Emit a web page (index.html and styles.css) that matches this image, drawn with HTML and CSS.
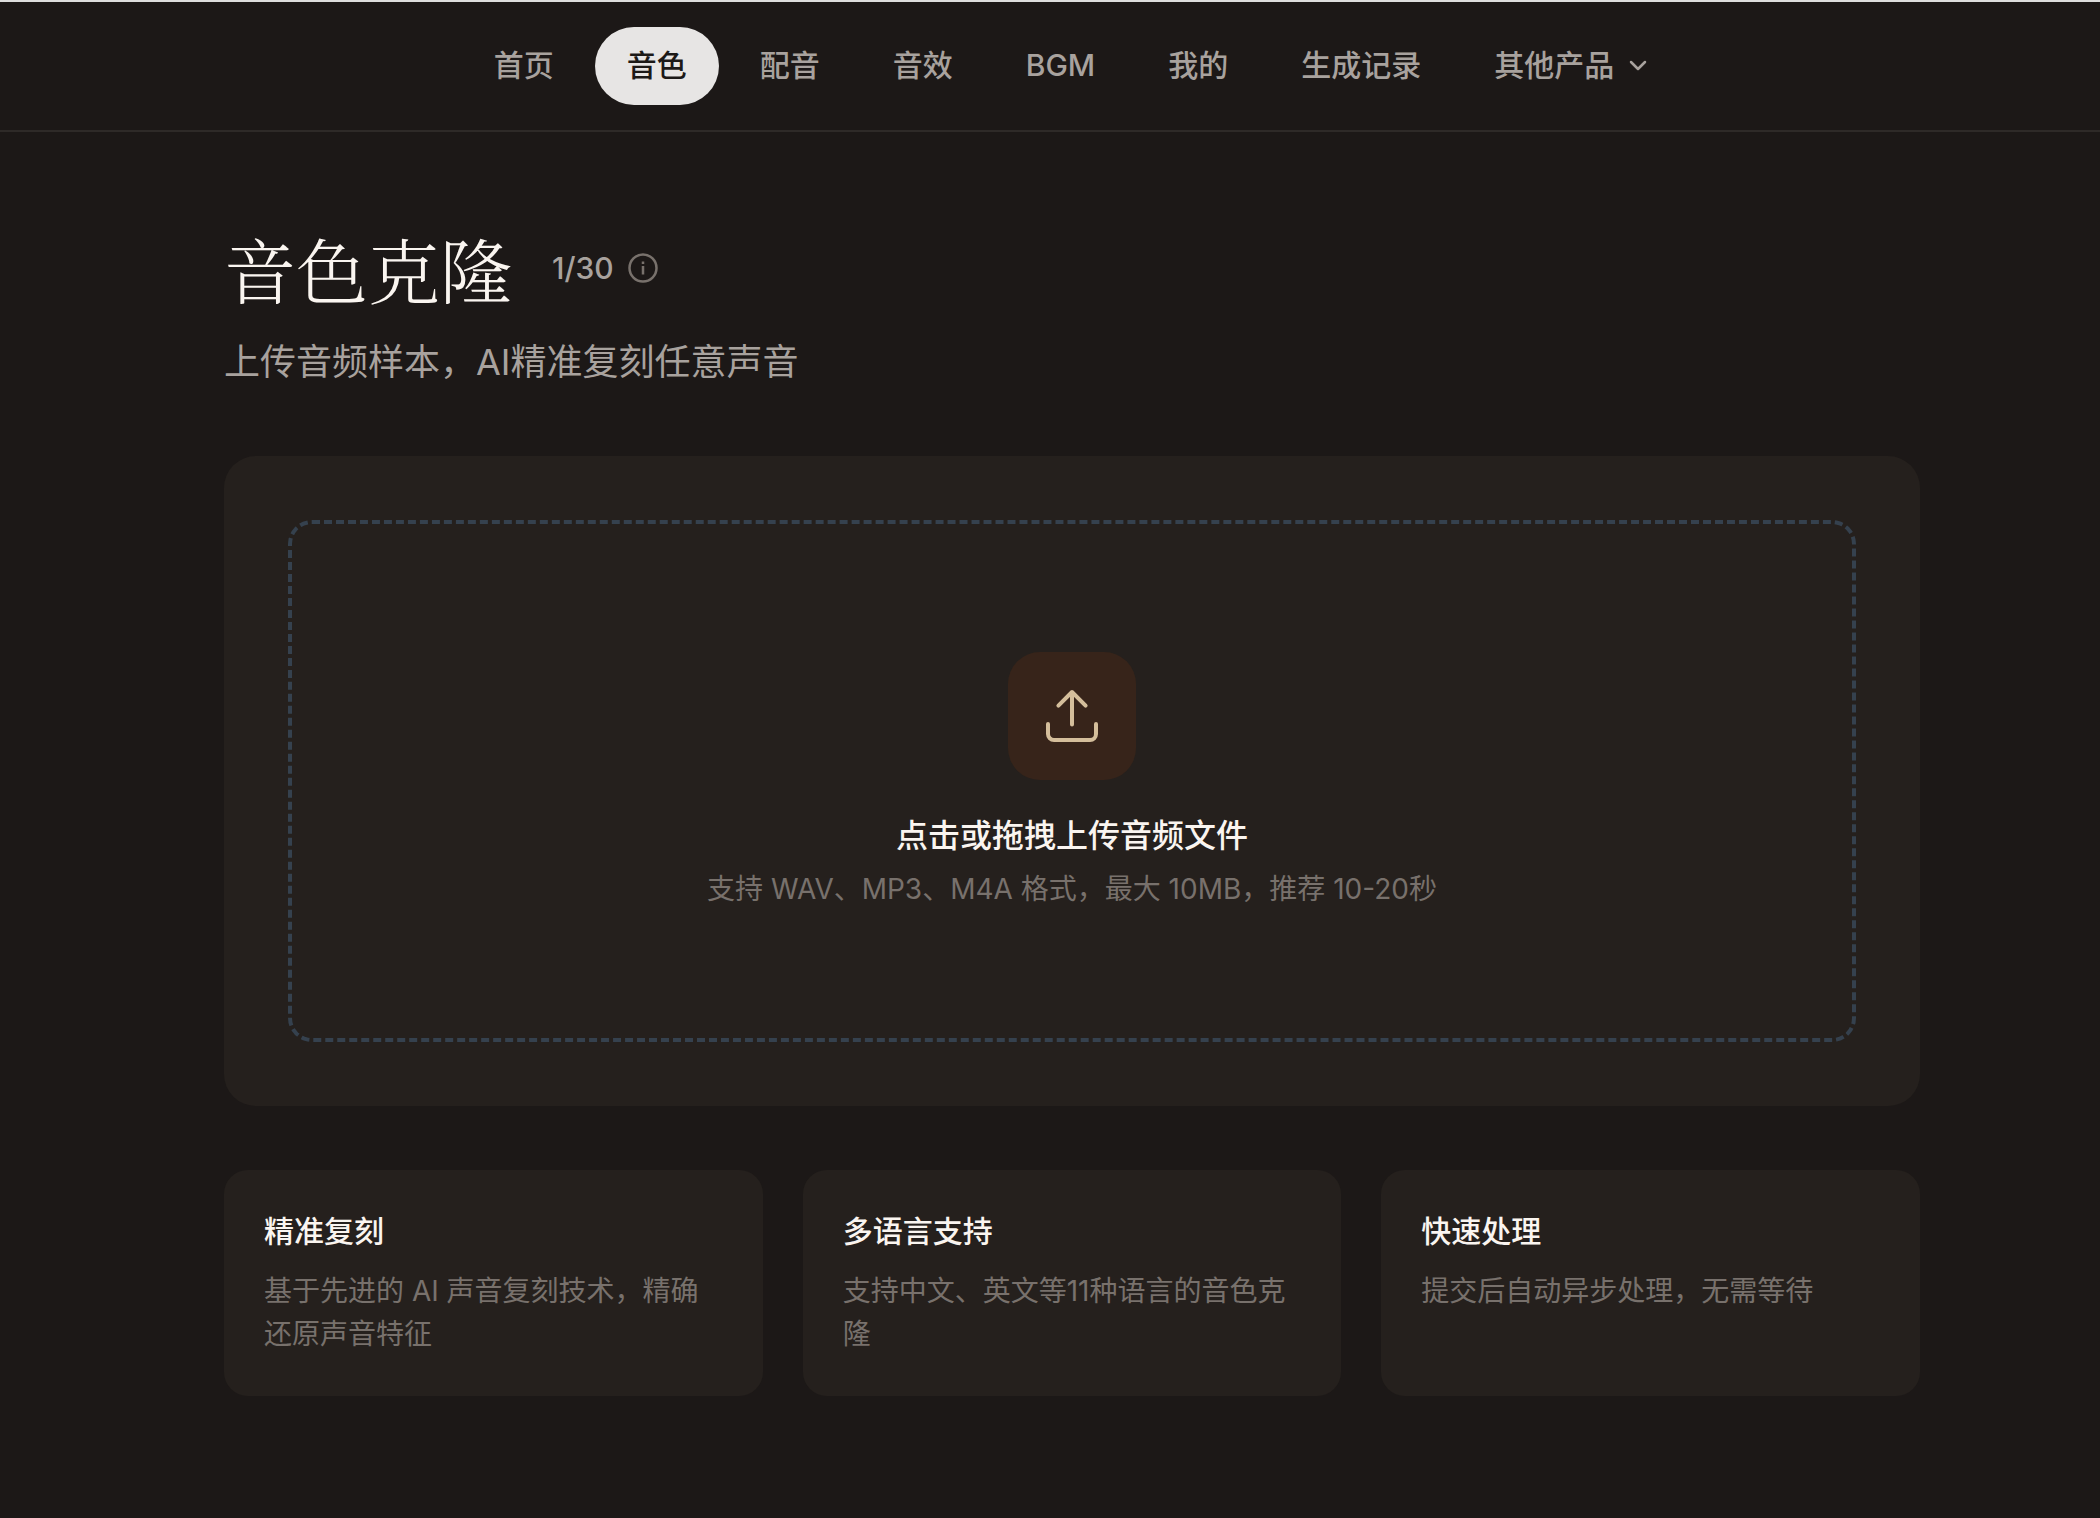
FILE: index.html
```html
<!DOCTYPE html>
<html lang="zh-CN">
<head>
    <meta charset="UTF-8">
    <meta name="viewport" content="width=device-width, initial-scale=1.0">
    <title>音色克隆</title>
    <link rel="stylesheet" href="styles.css">
</head>
<body>
    <header class="topnav">
        <nav>
            <a href="#home">首页</a>
            <a href="#voice" class="active">音色</a>
            <a href="#dubbing">配音</a>
            <a href="#effects">音效</a>
            <a href="#bgm">BGM</a>
            <a href="#mine">我的</a>
            <a href="#history">生成记录</a>
            <button type="button">
                其他产品
                <svg class="chevron" viewBox="0 0 24 24" fill="none" stroke="currentColor" stroke-width="2.5" stroke-linecap="round" stroke-linejoin="round">
                    <path d="M5 9l7 7 7-7"/>
                </svg>
            </button>
        </nav>
    </header>

    <main>
        <div class="title-row">
            <h1>音色克隆</h1>
            <div class="quota">
                <span>1/30</span>
                <svg class="info" viewBox="0 0 30 30" fill="none" stroke="currentColor" stroke-width="2.5">
                    <circle cx="15" cy="15" r="13.5"/>
                    <path d="M15 13v8.5M15 8.5v2.5"/>
                </svg>
            </div>
        </div>
        <p class="subtitle">上传音频样本，AI精准复刻任意声音</p>

        <section class="upload">
            <label class="dropzone" for="audio">
                <input type="file" id="audio" name="audio" accept=".wav,.mp3,.m4a">
                <span class="upload-icon">
                    <svg viewBox="0 0 24 24" fill="none" stroke="currentColor" stroke-width="1.5" stroke-linecap="round" stroke-linejoin="round">
                        <path d="M3 15v3.75A2.25 2.25 0 0 0 5.25 21h13.5A2.25 2.25 0 0 0 21 18.75V15M6.9 8.1L12 3l5.1 5.1M12 3v12.2"/>
                    </svg>
                </span>
                <span class="upload-title">点击或拖拽上传音频文件</span>
                <span class="upload-hint">支持 WAV、MP3、M4A 格式，最大 10MB，推荐 10-20秒</span>
            </label>
        </section>

        <section class="features">
            <div class="feature">
                <h3>精准复刻</h3>
                <p>基于先进的 AI 声音复刻技术，精确还原声音特征</p>
            </div>
            <div class="feature">
                <h3>多语言支持</h3>
                <p>支持中文、英文等11种语言的音色克隆</p>
            </div>
            <div class="feature">
                <h3>快速处理</h3>
                <p>提交后自动异步处理，无需等待</p>
            </div>
        </section>
    </main>
</body>
</html>
```
FILE: styles.css
```css
* {
    box-sizing: border-box;
    margin: 0;
    padding: 0;
}

body {
    min-height: 100vh;
    background-color: #1c1817;
    color: #faf5f0;
    font-family: Inter, 'Noto Sans CJK SC', sans-serif;
    font-size: 28px;
}

.topnav {
    height: 132px;
    padding-left: 44px;
    border-top: 2px solid #dededd;
    border-bottom: 2px solid #2e2a28;
    display: flex;
    align-items: center;
    justify-content: center;
}

.topnav nav {
    display: flex;
    gap: 9px;
}

.topnav a,
.topnav button {
    display: flex;
    align-items: center;
    gap: 12px;
    padding: 15px 32px 17px;
    border: none;
    border-radius: 40px;
    background: none;
    color: #a8a29e;
    font-family: inherit;
    font-size: 30px;
    font-weight: 500;
    line-height: 46px;
    text-decoration: none;
}

.topnav a.active {
    background-color: #e7e5e4;
    color: #1c1917;
}

.chevron {
    width: 24px;
    height: 24px;
}

main {
    padding: 96px 180px 100px 224px;
}

.title-row {
    display: flex;
    align-items: center;
    gap: 40px;
}

h1 {
    font-family: 'Noto Serif SC', 'Noto Serif CJK SC', 'Noto Sans CJK SC', serif;
    font-size: 72px;
    font-weight: 300;
    line-height: 80px;
}

.quota {
    display: flex;
    align-items: center;
    gap: 14px;
    color: #a8a29e;
    font-size: 30px;
    font-weight: 500;
    line-height: 46px;
}

.info {
    width: 30px;
    height: 30px;
    color: #78716c;
}

.subtitle {
    margin-top: 26px;
    color: #a8a29e;
    font-size: 36px;
    line-height: 56px;
}

.upload {
    margin-top: 66px;
    padding: 64px;
    border-radius: 32px;
    background-color: #25201d;
}

.dropzone {
    position: relative;
    display: flex;
    flex-direction: column;
    align-items: center;
    padding: 128px 32px;
    border: 4px dashed #35414e;
    border-radius: 24px;
    cursor: pointer;
}

/* the whole label is the click target */
.dropzone input {
    position: absolute;
    width: 1px;
    height: 1px;
    opacity: 0;
}

.upload-icon {
    display: flex;
    align-items: center;
    justify-content: center;
    width: 128px;
    height: 128px;
    margin-bottom: 32px;
    border-radius: 32px;
    background-color: #37241a;
    color: #d4be9b;
}

.upload-icon svg {
    width: 64px;
    height: 64px;
}

.upload-title {
    margin-bottom: 8px;
    font-size: 32px;
    font-weight: 500;
    line-height: 48px;
}

.upload-hint {
    color: #78716c;
    line-height: 42px;
}

.features {
    display: grid;
    grid-template-columns: repeat(3, 1fr);
    gap: 40px;
    margin-top: 64px;
}

.feature {
    padding: 40px;
    border-radius: 24px;
    background-color: #25201d;
}

.feature h3 {
    margin-bottom: 18px;
    font-size: 30px;
    font-weight: 500;
    line-height: 42px;
}

.feature p {
    color: #78716c;
    line-height: 43px;
}
```
